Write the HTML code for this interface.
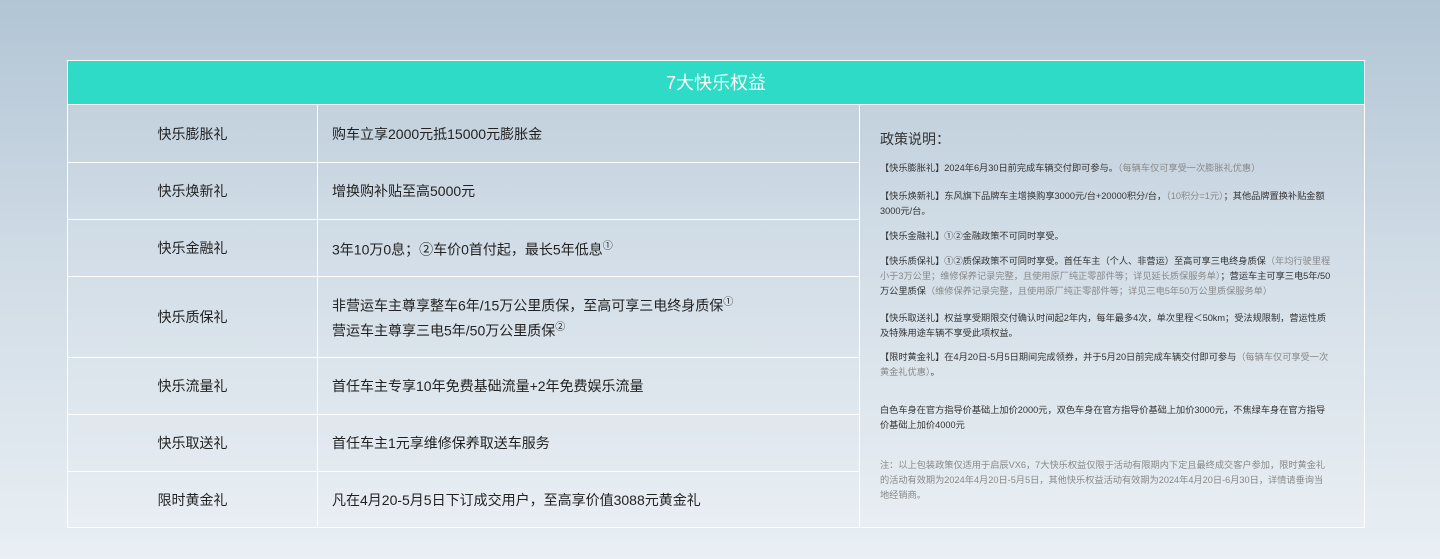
<!DOCTYPE html>
<html><head><meta charset="utf-8"><style>
*{margin:0;padding:0;box-sizing:border-box}
body{width:1440px;height:559px;overflow:hidden;background:linear-gradient(180deg,#b2c5d5 0%,#cfdbe5 45%,#e9eff4 100%);font-family:"Liberation Sans","Noto Sans CJK SC",sans-serif;color:#222;position:relative}
.b{position:absolute;border:1px solid #fff}
.hd{left:67px;top:60px;width:1298px;height:45px;background:#2ddbc6;color:#fff;font-size:18px;text-align:center;line-height:44px;border:1.5px solid #f4fbfb}
.c1{left:67px;width:251px;font-size:14px;text-align:center;display:flex;align-items:center;justify-content:center;background:rgba(255,255,255,.08)}
.c2{left:317px;width:543px;font-size:14px;padding-left:14px;display:flex;flex-direction:column;justify-content:center;line-height:22px;background:rgba(255,255,255,.08)}
.c3{left:859px;top:104px;width:506px;height:424px;font-size:9.2px;line-height:15px;color:#333;background:rgba(255,255,255,.08)}
.c3 p{position:absolute;left:20px;width:452px}
.g{color:#888}
sup{font-size:10px}
</style></head><body>
<div class="b hd">7大快乐权益</div>
<div class="b c1" style="top:104px;height:59px">快乐膨胀礼</div>
<div class="b c2" style="top:104px;height:59px">购车立享2000元抵15000元膨胀金</div>
<div class="b c1" style="top:162px;height:58px">快乐焕新礼</div>
<div class="b c2" style="top:162px;height:58px">增换购补贴至高5000元</div>
<div class="b c1" style="top:219px;height:58px">快乐金融礼</div>
<div class="b c2" style="top:219px;height:58px"><div>3年10万0息；②车价0首付起，最长5年低息<sup>①</sup></div></div>
<div class="b c1" style="top:276px;height:82px">快乐质保礼</div>
<div class="b c2" style="top:276px;height:82px"><div>非营运车主尊享整车6年/15万公里质保，至高可享三电终身质保<sup>①</sup></div><div>营运车主尊享三电5年/50万公里质保<sup>②</sup></div></div>
<div class="b c1" style="top:357px;height:58px">快乐流量礼</div>
<div class="b c2" style="top:357px;height:58px">首任车主专享10年免费基础流量+2年免费娱乐流量</div>
<div class="b c1" style="top:414px;height:58px">快乐取送礼</div>
<div class="b c2" style="top:414px;height:58px">首任车主1元享维修保养取送车服务</div>
<div class="b c1" style="top:471px;height:57px">限时黄金礼</div>
<div class="b c2" style="top:471px;height:57px">凡在4月20-5月5日下订成交用户，至高享价值3088元黄金礼</div>
<div class="b c3">
<div style="position:absolute;left:20px;top:25px;font-size:14px;line-height:18px">政策说明：</div>
<p style="top:55.5px">【快乐膨胀礼】2024年6月30日前完成车辆交付即可参与。<span class="g">（每辆车仅可享受一次膨胀礼优惠）</span></p>
<p style="top:83.5px">【快乐焕新礼】东风旗下品牌车主增换购享3000元/台+20000积分/台，<span class="g">（10积分=1元）</span>；其他品牌置换补贴金额3000元/台。</p>
<p style="top:123.5px">【快乐金融礼】①②金融政策不可同时享受。</p>
<p style="top:148.5px">【快乐质保礼】①②质保政策不可同时享受。首任车主（个人、非营运）至高可享三电终身质保<span class="g">（年均行驶里程小于3万公里；维修保养记录完整，且使用原厂纯正零部件等；详见延长质保服务单）</span>；营运车主可享三电5年/50万公里质保<span class="g">（维修保养记录完整，且使用原厂纯正零部件等；详见三电5年50万公里质保服务单）</span></p>
<p style="top:205.5px">【快乐取送礼】权益享受期限交付确认时间起2年内，每年最多4次，单次里程＜50km；受法规限制，营运性质及特殊用途车辆不享受此项权益。</p>
<p style="top:244.5px">【限时黄金礼】在4月20日-5月5日期间完成领券，并于5月20日前完成车辆交付即可参与<span class="g">（每辆车仅可享受一次黄金礼优惠）</span>。</p>
<p style="top:297.5px">白色车身在官方指导价基础上加价2000元，双色车身在官方指导价基础上加价3000元，不焦绿车身在官方指导价基础上加价4000元</p>
<p class="g" style="top:352.5px">注：以上包装政策仅适用于启辰VX6，7大快乐权益仅限于活动有限期内下定且最终成交客户参加，限时黄金礼的活动有效期为2024年4月20日-5月5日，其他快乐权益活动有效期为2024年4月20日-6月30日，详情请垂询当地经销商。</p>
</div>
</body></html>
